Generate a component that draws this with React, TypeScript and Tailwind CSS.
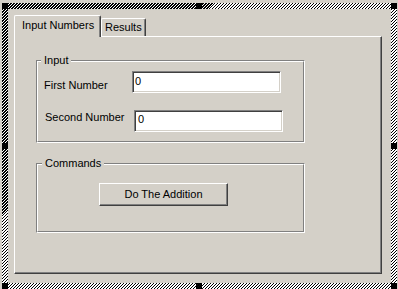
import React from "react";

const face = "bg-[#d4d0c8]";

function Handle({ cls }: { cls: string }) {
  return <div className={`absolute w-[6px] h-[6px] bg-black ${cls}`} />;
}

function Group({
  label,
  labelLeft,
  h,
  mt,
  children,
}: {
  label: string;
  labelLeft: string;
  h: string;
  mt: string;
  children?: React.ReactNode;
}) {
  return (
    <div
      className={`relative ml-[21px] ${mt} w-[269px] ${h} border-t border-l border-t-[#808080] border-l-[#808080] border-r border-b border-r-white border-b-white`}
    >
      <div className="h-full border-t border-l border-t-white border-l-white border-r border-b border-r-[#808080] border-b-[#808080]">
        {children}
      </div>
      <div
        className={`absolute top-[-7px] ${labelLeft} px-[3px] ${face} leading-[13px]`}
      >
        {label}
      </div>
    </div>
  );
}

function TextBox({ w, pad }: { w: string; pad: string }) {
  return (
    <div
      className={`${w} h-[22px] bg-white border-t border-l border-t-[#808080] border-l-[#808080] border-r border-b border-r-white border-b-white shadow-[inset_1px_1px_#404040,inset_-1px_-1px_#d4d0c8] ${pad} leading-[13px]`}
    >
      0
    </div>
  );
}

export default function App() {
  return (
    <div
      className={`relative w-[398px] h-[289px] ${face} pt-[3px] pl-[2px] text-[11px] text-black`}
      style={{ fontFamily: '"Liberation Sans", Arial, sans-serif' }}
    >
      <div className="w-[395px] h-[286px] p-[6px] bg-[repeating-linear-gradient(135deg,#000_0px,#000_0.8px,#fff_0.8px,#fff_2.12px)]">
        <div className={`w-[383px] h-[274px] ${face} pl-[6px] pt-[6px]`}>
          {/* tab strip */}
          <div className="flex items-end h-[21px]">
            <div
              className={`relative z-10 h-[22px] mb-[-1px] w-[87px] ${face} border-l border-t border-l-white border-t-white border-r border-r-[#404040] shadow-[inset_-1px_0_#808080] rounded-tl-[2px] rounded-tr-[2px] pl-[7px] pt-[3px] leading-[13px]`}
            >
              Input Numbers
            </div>
            <div
              className={`h-[18px] w-[45px] ${face} border-l border-t border-l-white border-t-white border-r border-r-[#404040] shadow-[inset_-1px_0_#808080] rounded-tl-[2px] rounded-tr-[2px] pl-[3px] pt-[2px] leading-[13px]`}
            >
              Results
            </div>
          </div>
          {/* tab page */}
          <div
            className={`w-[368px] h-[238px] ${face} border-l border-t border-l-white border-t-white border-r border-b border-r-[#404040] border-b-[#404040] shadow-[inset_-1px_-1px_#808080] pt-[23px]`}
          >
            <Group label="Input" labelLeft="left-[4px]" h="h-[83px]" mt="mt-0">
              <div className="flex items-start mt-[9px]">
                <div className="ml-[6px] w-[88px] mt-[8px] leading-[13px]">
                  First Number
                </div>
                <TextBox w="w-[149px]" pad="pl-[2px] pt-[3px]" />
              </div>
              <div className="flex items-start mt-[17px]">
                <div className="ml-[7px] w-[89px] mt-[1px] leading-[13px]">
                  Second Number
                </div>
                <TextBox w="w-[149px]" pad="pl-[3px] pt-[2px]" />
              </div>
            </Group>
            <Group
              label="Commands"
              labelLeft="left-[5px]"
              h="h-[70px]"
              mt="mt-[20px]"
            >
              <div className="mt-[18px] ml-[61px]">
                <button
                  className={`w-[129px] h-[23px] ${face} border-t border-l border-t-white border-l-white border-r border-b border-r-[#404040] border-b-[#404040] shadow-[inset_-1px_-1px_#808080] flex items-center justify-center leading-[13px] pb-[1px]`}
                >
                  Do The Addition
                </button>
              </div>
            </Group>
          </div>
        </div>
      </div>
      <Handle cls="left-[2px] top-[3px]" />
      <Handle cls="left-[196px] top-[3px]" />
      <Handle cls="left-[391px] top-[3px]" />
      <Handle cls="left-[2px] top-[143px]" />
      <Handle cls="left-[391px] top-[143px]" />
      <Handle cls="left-[2px] top-[283px]" />
      <Handle cls="left-[196px] top-[283px]" />
      <Handle cls="left-[391px] top-[283px]" />
    </div>
  );
}
